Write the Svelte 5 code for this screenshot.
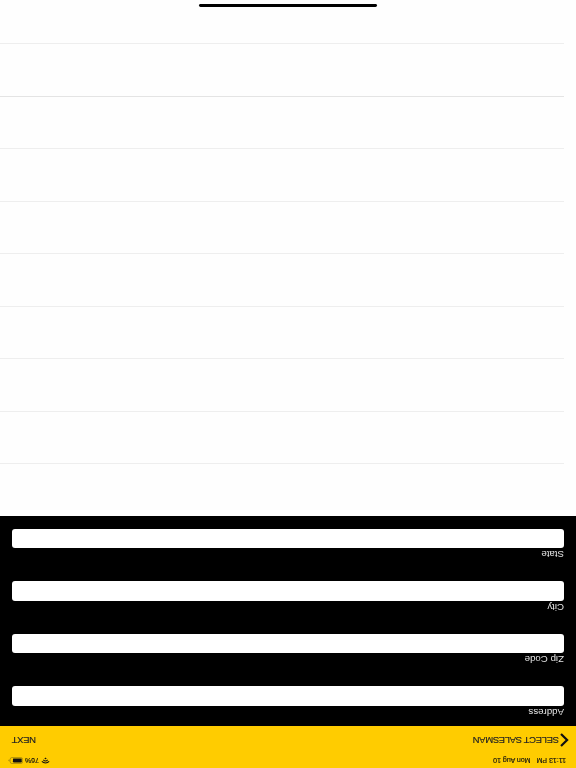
<script>
    const fields = ['Address', 'Zip Code', 'City', 'State'];
    const rows = Array.from({ length: 9 });
</script>

<div class="screen">
    <header class="top">
        <div class="status">
            <div class="clock">
                <span>11:13 PM</span>
                <span>Mon Aug 10</span>
            </div>
            <div class="signal">
                <svg class="wifi" viewBox="0 0 12 9" width="9" height="7">
                    <path d="M6 8.6 4.4 6.8a2.3 2.3 0 0 1 3.2 0ZM3.5 5.8 2.6 4.8a5 5 0 0 1 6.8 0l-.9 1a3.7 3.7 0 0 0-5 0ZM1.6 3.8.6 2.8a7.8 7.8 0 0 1 10.8 0l-1 1a6.4 6.4 0 0 0-8.8 0Z" fill="#111" />
                </svg>
                <span>76%</span>
                <svg class="battery" viewBox="0 0 17 8" width="15" height="7">
                    <rect x="0.4" y="0.6" width="14.2" height="6.8" rx="2" fill="none" stroke="#8a7410" stroke-width="0.7" />
                    <rect x="1.4" y="1.6" width="10" height="4.8" rx="1" fill="#111" />
                    <path d="M15.4 2.8c.8.2 1.2.6 1.2 1.2s-.4 1-1.2 1.2Z" fill="#8a7410" />
                </svg>
            </div>
        </div>
        <div class="nav">
            <button class="back">
                <svg viewBox="0 0 9 14" width="9" height="14">
                    <path d="M8 1 1.9 7 8 13" fill="none" stroke="#111" stroke-width="2.2" />
                </svg>
                SELECT SALESMAN
            </button>
            <button class="next">NEXT</button>
        </div>
    </header>

    <form class="form">
        {#each fields as field}
            <label class="field">
                <span>{field}</span>
                <input type="text" />
            </label>
        {/each}
    </form>

    <ul class="list">
        {#each rows as _}
            <li></li>
        {/each}
    </ul>

    <div class="home"></div>
</div>

<style>
    :global(body) {
        margin: 0;
        background: #fff;
    }
    .screen {
        position: relative;
        width: 576px;
        height: 768px;
        overflow: hidden;
        background: #fefefe;
        font-family: "Liberation Sans", Arial, sans-serif;
        color: #111;
        transform: rotate(180deg);
        will-change: transform;
    }
    .top {
        height: 42px;
        background: #ffcc00;
    }
    .status {
        height: 15px;
        display: flex;
        justify-content: space-between;
        align-items: center;
        padding: 0 8px 0 10px;
        font-size: 7px;
        -webkit-text-stroke: 0.15px #111;
    }
    .clock {
        display: flex;
        gap: 6px;
    }
    .signal {
        display: flex;
        align-items: center;
        gap: 2px;
    }
    .nav {
        height: 27px;
        display: flex;
        justify-content: space-between;
        align-items: center;
        padding: 0 12px 2px 7px;
        box-sizing: border-box;
    }
    .nav button {
        border: 0;
        padding: 0;
        background: none;
        color: #222;
        font: inherit;
        font-size: 9.5px;
        letter-spacing: -0.35px;
        -webkit-text-stroke: 0.15px #222;
        display: flex;
        align-items: center;
        gap: 1px;
    }
    .form {
        height: 210px;
        background: #000;
        box-sizing: border-box;
        padding: 10px 12px 0;
    }
    .field {
        display: block;
        height: 52.5px;
    }
    .field span {
        display: block;
        height: 10px;
        line-height: 8px;
        font-size: 9.7px;
        color: #e6e6e6;
    }
    .field input {
        display: block;
        width: 100%;
        height: 19.5px;
        margin: 0;
        padding: 0;
        box-sizing: border-box;
        border: 0;
        border-radius: 3px;
        background: #fff;
    }
    .list {
        list-style: none;
        margin: 0;
        padding: 0 0 0 12px;
    }
    .list li {
        height: 52.5px;
        box-sizing: border-box;
        border-bottom: 1px solid #eeeeee;
    }
    .list li:nth-child(8) {
        border-bottom-color: #e4e4e4;
    }
    .home {
        position: absolute;
        left: 199px;
        bottom: 4px;
        width: 178px;
        height: 3px;
        border-radius: 2px;
        background: #000;
    }
</style>
